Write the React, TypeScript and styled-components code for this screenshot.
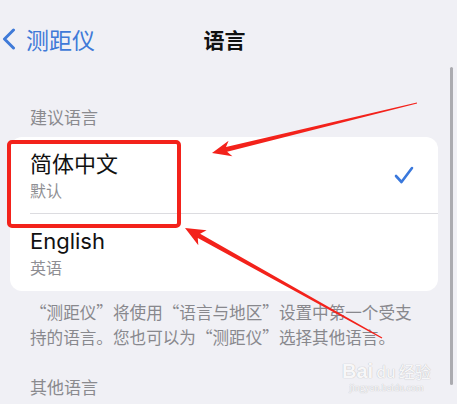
import React from 'react';
import styled, { createGlobalStyle } from 'styled-components';

const GlobalStyle = createGlobalStyle`
  html, body {
    margin: 0;
    padding: 0;
    background: #f0f0f5;
  }
  body {
    font-family: 'Inter', 'Noto Sans CJK SC', sans-serif;
    -webkit-font-smoothing: antialiased;
  }
`;

const Screen = styled.div`
  position: relative;
  width: 457px;
  height: 404px;
  overflow: hidden;
  background: #f0f0f5;
`;

const NavBar = styled.div`
  display: grid;
  grid-template-columns: 1fr auto 1fr;
  align-items: center;
  height: 30px;
  padding: 22px 10px 0 2px;
`;

const BackButton = styled.div`
  display: flex;
  align-items: center;
  gap: 10px;
  color: #3f7ad8;
  font-size: 23px;
  font-family: 'Noto Sans CJK SC', sans-serif;
`;

const Title = styled.div`
  font-size: 21px;
  font-weight: 700;
  color: #111;
  font-family: 'Noto Sans CJK SC', sans-serif;
`;

const SectionHeader = styled.div<{ $top: number }>`
  margin-top: ${p => p.$top}px;
  padding-left: 30px;
  font-size: 17px;
  line-height: 22px;
  color: #8a8a8e;
  font-family: 'Noto Sans CJK SC', sans-serif;
`;

const Card = styled.div`
  margin: 9px 19px 0 10px;
  background: #fff;
  border-radius: 12px;
  overflow: hidden;
`;

const Row = styled.div<{ $divider?: boolean }>`
  display: flex;
  align-items: center;
  padding-left: 20px;
  padding-right: 24px;
  height: ${p => (p.$divider ? 76 : 78)}px;
`;

const RowBody = styled.div<{ $divider?: boolean }>`
  flex: 1;
  display: flex;
  align-items: center;
  height: 100%;
  border-bottom: ${p => (p.$divider ? '1px solid #dcdce0' : 'none')};
  margin-right: -24px;
  padding-right: 24px;
`;

const Labels = styled.div`
  flex: 1;
  display: flex;
  flex-direction: column;
  gap: 2px;
`;

const Primary = styled.div`
  font-size: 22px;
  line-height: 28px;
  color: #111;
`;

const Secondary = styled.div`
  font-size: 16px;
  line-height: 20px;
  color: #8e8e93;
  font-family: 'Noto Sans CJK SC', sans-serif;
`;

const Footnote = styled.div`
  padding: 9px 34px 0 30px;
  font-size: 16.6px;
  line-height: 25px;
  color: #88888d;
  font-family: 'Noto Sans CJK SC', sans-serif;
`;

const ScrollIndicator = styled.div`
  position: absolute;
  left: 450px;
  top: 67px;
  width: 3px;
  height: 318px;
  border-radius: 2px;
  background: #ababb0;
`;

const Highlight = styled.div`
  position: absolute;
  left: 7px;
  top: 140px;
  width: 166px;
  height: 80px;
  border: 4px solid #f3221b;
  border-radius: 5px;
`;

const Annotations = styled.svg`
  position: absolute;
  left: 0;
  top: 0;
  pointer-events: none;
`;

const Watermark = styled.div`
  position: absolute;
  left: 342px;
  top: 360px;
  display: flex;
  flex-direction: column;
  align-items: center;
  color: rgba(255, 255, 255, 0.9);
  text-shadow: 0 0 1px #c4c4c8, 0 0 1px #c4c4c8;
  font-family: 'Liberation Sans', sans-serif;
`;

const MarkTop = styled.div`
  display: flex;
  align-items: baseline;
  gap: 3px;
  font-size: 20px;
  line-height: 22px;
  font-weight: 700;
  span {
    font-family: 'Noto Sans CJK SC', sans-serif;
    font-size: 16px;
    font-weight: 400;
  }
`;

const MarkUrl = styled.div`
  font-size: 10px;
  font-family: 'Liberation Serif', serif;
`;

type Pt = [number, number];

// builds a tapered arrow polygon pointing from tail to tip
const arrowPoints = (tail: Pt, tip: Pt, headLen = 19, headHalf = 8) => {
  const dx = tip[0] - tail[0];
  const dy = tip[1] - tail[1];
  const len = Math.hypot(dx, dy);
  const ux = dx / len;
  const uy = dy / len;
  const nx = -uy;
  const ny = ux;
  const at = (d: number, w: number): Pt => [tip[0] - ux * d + nx * w, tip[1] - uy * d + ny * w];
  const pts: Pt[] = [
    tip,
    at(headLen, headHalf),
    at(headLen - 4, 2.4),
    [tail[0] + nx * 0.6, tail[1] + ny * 0.6],
    [tail[0] - nx * 0.6, tail[1] - ny * 0.6],
    at(headLen - 4, -2.4),
    at(headLen, -headHalf),
  ];
  return pts.map(p => `${p[0].toFixed(1)},${p[1].toFixed(1)}`).join(' ');
};

const Check = () => (
  <svg width="20" height="18" viewBox="0 0 20 18">
    <path d="M2 10 L7.5 16 L18 2" fill="none" stroke="#3a78dc" strokeWidth="2.6" strokeLinecap="round" strokeLinejoin="round" />
  </svg>
);

const App: React.FC = () => {
  return (
    <Screen>
      <GlobalStyle />
      <NavBar>
        <BackButton>
          <svg width="14" height="22" viewBox="0 0 14 22">
            <path d="M11.5 2 L2.5 11 L11.5 20" fill="none" stroke="#3f7ad8" strokeWidth="3" strokeLinecap="round" strokeLinejoin="round" />
          </svg>
          测距仪
        </BackButton>
        <Title>语言</Title>
        <div />
      </NavBar>

      <SectionHeader $top={54}>建议语言</SectionHeader>
      <Card>
        <Row $divider>
          <RowBody $divider>
            <Labels>
              <Primary>简体中文</Primary>
              <Secondary>默认</Secondary>
            </Labels>
            <Check />
          </RowBody>
        </Row>
        <Row>
          <RowBody>
            <Labels>
              <Primary>English</Primary>
              <Secondary>英语</Secondary>
            </Labels>
          </RowBody>
        </Row>
      </Card>
      <Footnote>“测距仪”将使用“语言与地区”设置中第一个受支持的语言。您也可以为“测距仪”选择其他语言。</Footnote>
      <SectionHeader $top={26}>其他语言</SectionHeader>

      <ScrollIndicator />
      <Watermark>
        <MarkTop>
          Bai<span>du</span><span>经验</span>
        </MarkTop>
        <MarkUrl>jingyan.baidu.com</MarkUrl>
      </Watermark>
      <Highlight />
      <Annotations width="457" height="404" viewBox="0 0 457 404">
        <polygon points={arrowPoints([417, 103], [212, 153])} fill="#f3221b" />
        <polygon points={arrowPoints([382, 338], [185, 228], 20, 8.5)} fill="#f3221b" />
      </Annotations>
    </Screen>
  );
};

export default App;
